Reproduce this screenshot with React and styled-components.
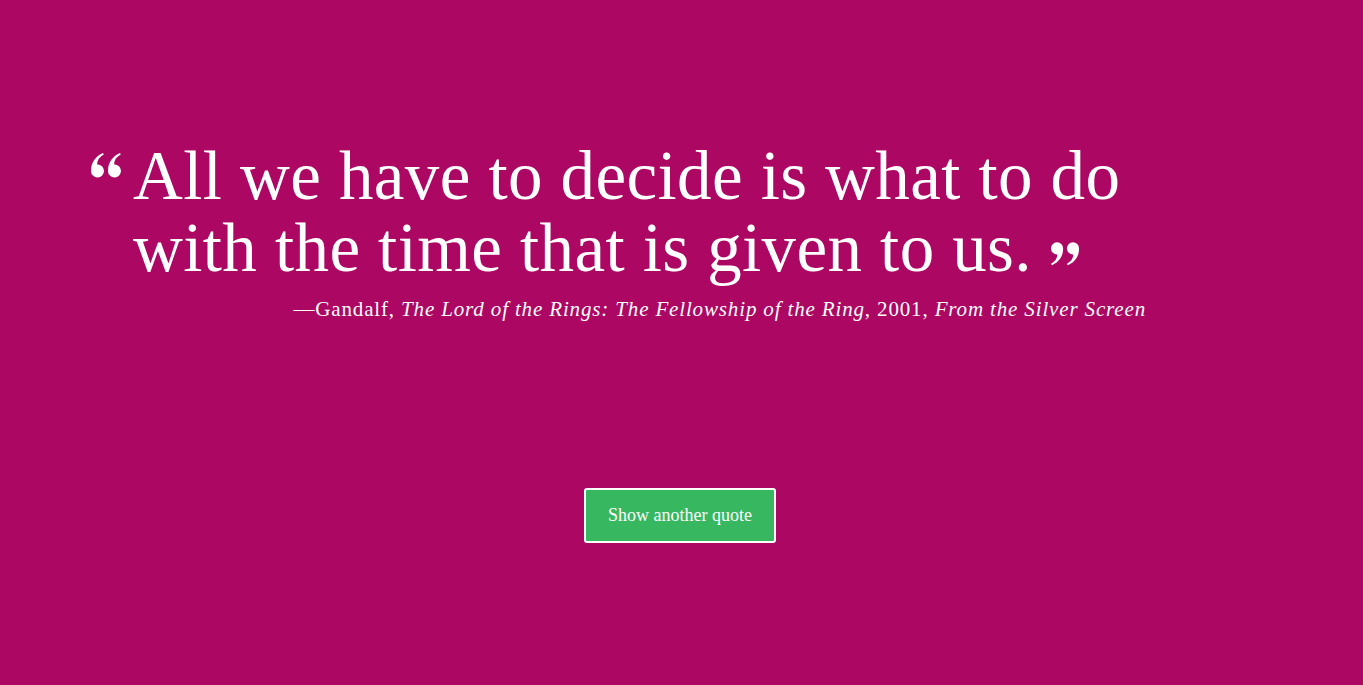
import React from "react";
import styled, { createGlobalStyle } from "styled-components";

const GlobalStyle = createGlobalStyle`
  html, body {
    margin: 0;
    padding: 0;
    background-color: #ab0763;
  }
  body {
    font-family: "Liberation Serif", "DejaVu Serif", serif;
    color: #ffffff;
  }
`;

const Page = styled.div`
  height: 685px;
  display: flex;
  flex-direction: column;
  background-color: #ab0763;
  overflow: hidden;
`;

const QuoteBox = styled.blockquote`
  margin: 0;
  padding: 140px 0 0 90px;
  width: 1056px;
`;

const QuoteText = styled.p`
  margin: 0;
  display: flex;
  align-items: flex-start;
  font-size: 69px;
  line-height: 72px;
  letter-spacing: 0.4px;
`;

const OpenMark = styled.svg`
  flex-shrink: 0;
  width: 32px;
  height: 26px;
  margin: 12px 11px 0 0;
`;

const Words = styled.span`
  display: block;
  width: 1010px;
`;

const CloseMark = styled.svg`
  width: 30px;
  height: 26px;
  margin-left: 18px;
  vertical-align: 4px;
`;

const Cite = styled.footer`
  margin-top: 13px;
  text-align: right;
  font-size: 21px;
  line-height: 24px;
  letter-spacing: 0.85px;
`;

const Title = styled.em`
  font-style: italic;
`;

const ButtonRow = styled.div`
  display: flex;
  justify-content: center;
  margin-top: 167px;
  padding-right: 3px;
`;

const Button = styled.button`
  width: 192px;
  height: 55px;
  background-color: #37b760;
  color: #ffffff;
  border: 2px solid #ffffff;
  border-radius: 3px;
  font-family: "Liberation Serif", serif;
  font-size: 18px;
  cursor: pointer;
`;

const commaPath =
  "M1 19 C1 10 6 4 13 1 L13.8 2.6 C9 5.2 7 9 7.3 12.5 A6.5 6.5 0 1 1 1 19 Z";

function QuoteGlyph({ closing }) {
  const Svg = closing ? CloseMark : OpenMark;
  return (
    <Svg viewBox="0 0 32 26" aria-hidden="true">
      <g fill="#ffffff" transform={closing ? "rotate(180 16 13)" : undefined}>
        <path d={commaPath} />
        <path d={commaPath} transform="translate(17 0)" />
      </g>
    </Svg>
  );
}

export default function App() {
  return (
    <>
      <GlobalStyle />
      <Page>
        <QuoteBox>
          <QuoteText>
            <QuoteGlyph />
            <Words>
              All we have to decide is what to do with the time that is given
              to us.
              <QuoteGlyph closing />
            </Words>
          </QuoteText>
          <Cite>
            —Gandalf, <Title>The Lord of the Rings: The Fellowship of the Ring</Title>, 2001,{" "}
            <Title>From the Silver Screen</Title>
          </Cite>
        </QuoteBox>
        <ButtonRow>
          <Button>Show another quote</Button>
        </ButtonRow>
      </Page>
    </>
  );
}
